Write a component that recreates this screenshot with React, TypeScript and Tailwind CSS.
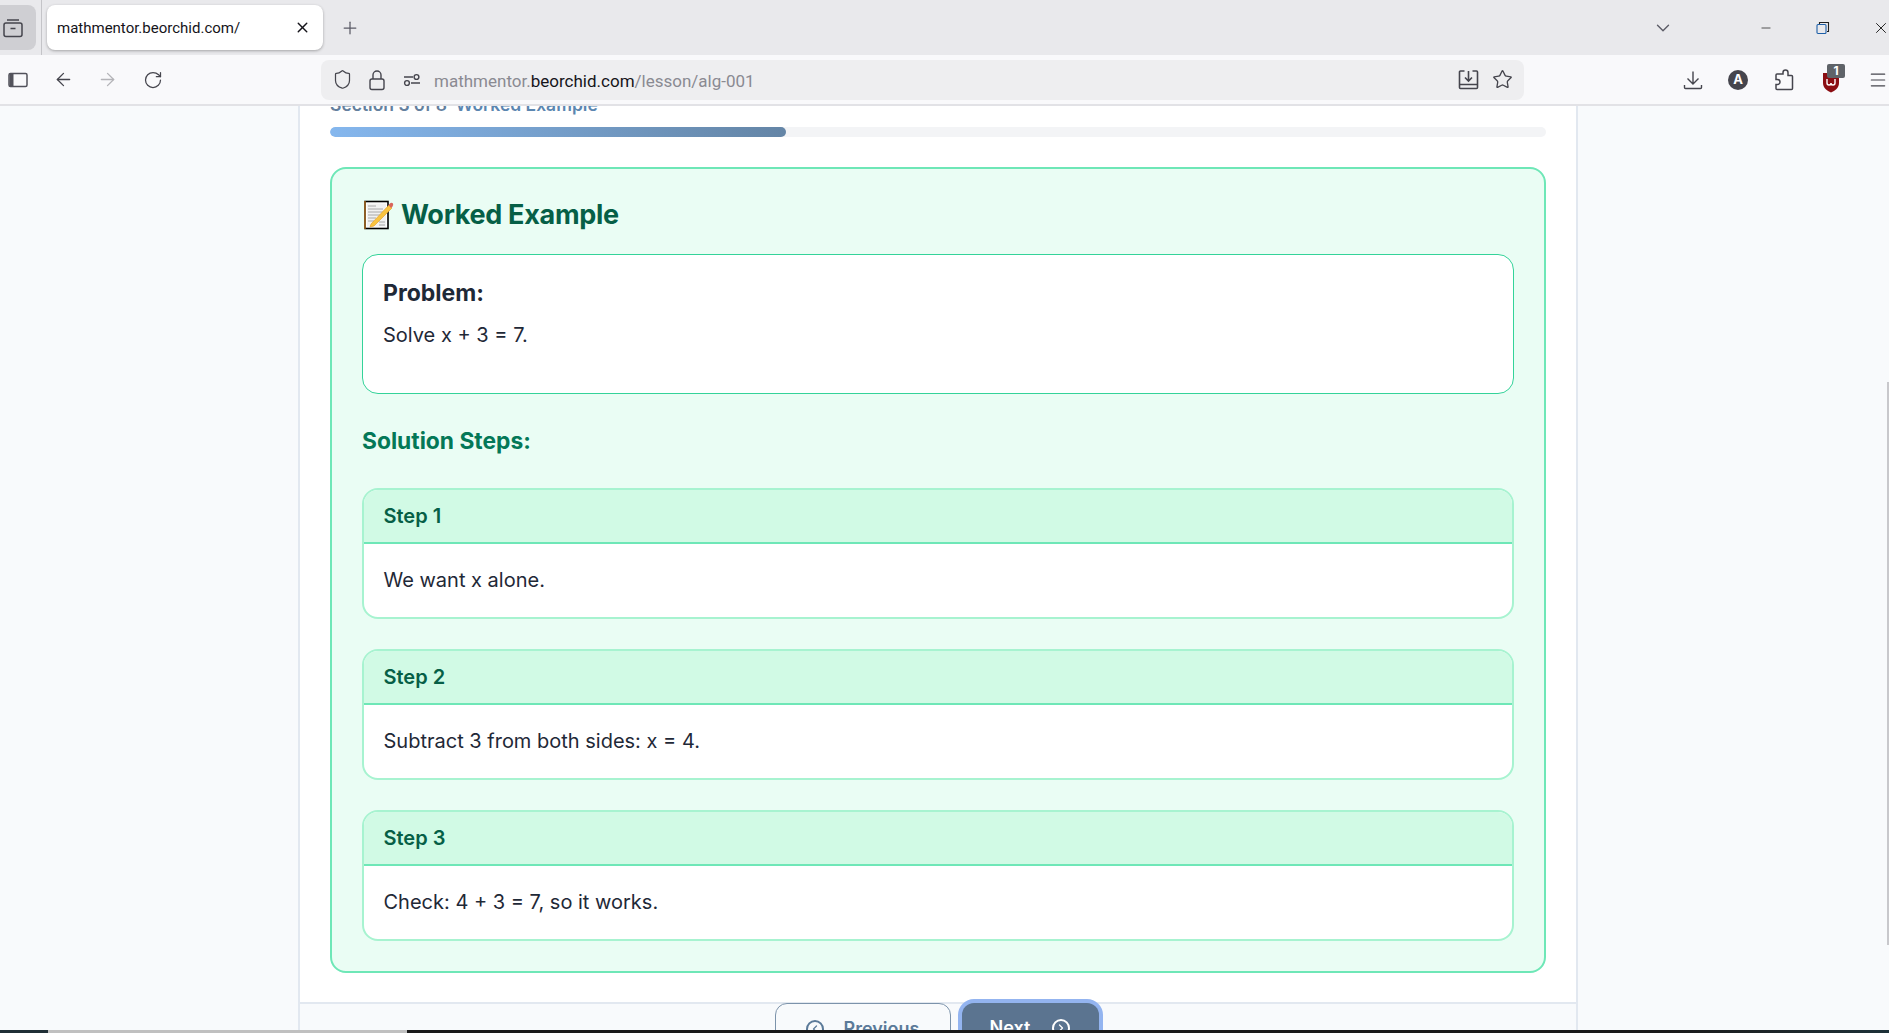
import { ArrowLeft, ArrowRight, RotateCw, Star, Shield, Menu, ChevronDown, ChevronLeft, ChevronRight, Plus, X, Minus } from "lucide-react"

const steps = [
  { title: "Step 1", body: "We want x alone." },
  { title: "Step 2", body: "Subtract 3 from both sides: x = 4." },
  { title: "Step 3", body: "Check: 4 + 3 = 7, so it works." },
]

function MemoIcon() {
  return (
    <svg width="30" height="30" viewBox="0 0 30 30" className="shrink-0">
      <rect x="1" y="1.5" width="23" height="27" fill="#fff" stroke="#000" strokeWidth="1.6" />
      <path d="M1 1v28" stroke="#e8891c" strokeWidth="1" />
      <rect x="3" y="3.5" width="19" height="23" fill="#f1f1f1" />
      <g stroke="#a8a8a8" strokeWidth="1">
        <path d="M4 6h8M4 9h15M4 12h15M4 15h12M4 18h8M4 21h6M15 22h6M15 25h6" />
      </g>
      <path d="M7 24 L25 5 L28 8 L10 26 L6 27 Z" fill="#f9c440" stroke="#e49b1f" strokeWidth="0.6" />
      <path d="M24.5 5 L26.5 3 Q28 2.4 29 3.6 Q29.6 5 28.5 6.5 L27 8 Z" fill="#d9655b" />
    </svg>
  )
}

function SidebarIcon() {
  return (
    <svg width="20" height="20" viewBox="0 0 20 20" fill="none" stroke="#52525b" strokeWidth="1.5">
      <rect x="1" y="3.500" width="18" height="13" rx="1.5" />
      <path d="M3.500 4v12" strokeWidth="4" />
    </svg>
  )
}

function LockIcon() {
  return (
    <svg width="20" height="22" viewBox="0 0 20 22" fill="none" stroke="#45454d" strokeWidth="1.4" className="ml-[14px]">
      <rect x="3" y="10" width="14" height="10.500" rx="2" />
      <path d="M6 10V6a4 4 0 0 1 8 0v4" />
    </svg>
  )
}

function DownloadIcon() {
  return (
    <svg width="20" height="20" viewBox="0 0 20 20" fill="none" stroke="#45454d" strokeWidth="1.4" className="mr-[25px]">
      <path d="M10 1.500v12M4.500 8.500l5.500 5.500 5.500-5.500M1.500 15v2.500a1 1 0 0 0 1 1h15a1 1 0 0 0 1-1V15" />
    </svg>
  )
}

function PuzzleIcon() {
  return (
    <svg width="20" height="22" viewBox="0 0 20 22" fill="none" stroke="#45454d" strokeWidth="1.5" className="mr-[28px]">
      <path d="M9 5V3.500a2.500 2.500 0 0 1 5 0V6.500h3.500a1 1 0 0 1 1 1V19.500a1 1 0 0 1-1 1H3a1 1 0 0 1-1-1V15.500h1.500a2.500 2.500 0 0 0 0-5H2V6a1 1 0 0 1 1-1Z" />
    </svg>
  )
}

export default function App() {
  return (
    <div className="flex h-screen w-full flex-col overflow-hidden bg-[#f8fafc] font-['Inter',sans-serif]">
      {/* tab strip */}
      <div className="flex h-[55px] shrink-0 items-center bg-[#e9e9ec]">
        <div className="flex h-[45px] w-[36px] items-center justify-center rounded-r-lg bg-[#cfcfd3] pr-[10px]">
          <svg width="20" height="20" viewBox="0 0 20 20" fill="none" stroke="#45454d" strokeWidth="1.5">
            <rect x="1" y="5" width="18" height="13.500" rx="2" />
            <path d="M4 2h12M7.500 10.500h5" />
          </svg>
        </div>
        <div className="ml-[5px] h-[55px] w-px bg-[#c4c4c8]" />
        <div className="ml-[5px] flex h-[45px] w-[276px] items-center justify-between rounded-lg bg-white pl-[10px] pr-[12px] shadow-[0_1px_3px_rgba(0,0,0,0.3)]">
          <span className="pt-[2px] font-['Roboto',sans-serif] text-[15px] text-[#15141a]">mathmentor.beorchid.com/</span>
          <X size={17} color="#15141a" strokeWidth={2} />
        </div>
        <Plus size={20} color="#5b5b66" strokeWidth={1.5} className="ml-[17px]" />
        <div className="flex-1" />
        <ChevronDown size={22} color="#5b5b66" strokeWidth={1.5} className="mr-[85px]" />
        <Minus size={14} color="#222" strokeWidth={1.3} className="mr-[43px]" />
        <svg width="14" height="14" viewBox="0 0 14 14" fill="none" stroke="#222" strokeWidth="1.1" className="mr-[42px]">
          <rect x="1" y="3.500" width="9" height="9" rx="1" stroke="#1d5fa8" />
          <path d="M3.500 3V1.500h9v9H11" />
        </svg>
        <X size={18} color="#222" strokeWidth={1.3} className="mr-[-1px]" />
      </div>

      {/* nav bar */}
      <div className="z-10 flex h-[51px] shrink-0 items-center border-b-2 border-[#e2e2e6] bg-[#f9f9fb]">
        <div className="ml-[8px] flex items-center">
          <SidebarIcon />
          <ArrowLeft size={21} color="#45454d" strokeWidth={1.5} className="ml-[25px]" />
          <ArrowRight size={21} color="#b4b4b8" strokeWidth={1.5} className="ml-[23px]" />
          <RotateCw size={20} color="#45454d" strokeWidth={1.5} className="ml-[25px]" />
        </div>
        <div className="ml-[158px] flex h-[40px] w-[1203px] items-center rounded-lg bg-[#eeeef0] pl-[11px] pr-[11px]">
          <Shield size={21} color="#45454d" strokeWidth={1.4} />
          <LockIcon />
          <svg width="18" height="18" viewBox="0 0 18 18" fill="none" stroke="#45454d" strokeWidth="1.4" className="ml-[16px]">
            <path d="M1 6h9M8 12h9" />
            <circle cx="13.500" cy="6" r="2.400" />
            <circle cx="4" cy="12" r="2.400" />
          </svg>
          <div className="ml-[13px] pt-[5px] font-['Roboto',sans-serif] text-[17px] text-[#8a8a92]">
            mathmentor.<span className="text-[#15141a]">beorchid.com</span>/lesson/alg-001
          </div>
          <div className="flex-1" />
          <svg width="21" height="21" viewBox="0 0 21 21" fill="none" stroke="#45454d" strokeWidth="1.6">
            <path d="M6.500 2H2.500a1 1 0 0 0-1 1v15.500a1 1 0 0 0 1 1h16a1 1 0 0 0 1-1V3a1 1 0 0 0-1-1h-4" />
            <path d="M10.500 2v9M7 8.500l3.500 3.500L14 8.500M1.500 15.500h18" />
          </svg>
          <Star size={21} color="#45454d" strokeWidth={1.5} className="ml-[13px]" />
        </div>
        <div className="flex-1" />
        <DownloadIcon />
        <div className="mr-[26px] flex h-[20px] w-[20px] items-center justify-center rounded-full bg-[#45454d] text-[13px] font-bold text-white">A</div>
        <PuzzleIcon />
        <div className="relative mr-[26px] h-[24px] w-[20px]">
          <svg width="18" height="22" viewBox="0 0 18 22" className="mt-[3px]">
            <path d="M1 2h16v10c0 5-4 7.500-8 9.500C5 19.500 1 17 1 12Z" fill="#8b0d12" />
            <path d="M5 8v4a2 2 0 0 0 4 0 2 2 0 0 0 4 0V8" fill="none" stroke="#fff" strokeWidth="1.4" />
          </svg>
          <span className="absolute left-[5px] top-[-4px] flex h-[14px] w-[18px] items-center justify-center rounded-[2px] bg-[#5f6368] text-[12px] font-bold leading-none text-white">1</span>
        </div>
        <Menu size={20} color="#45454d" strokeWidth={1.4} className="mr-[1px]" />
      </div>

      {/* page */}
      <div className="flex min-h-0 flex-1">
        <div className="w-[298px] shrink-0 bg-[#f8fafc]" />
        <div className="flex w-[1280px] shrink-0 flex-col overflow-hidden border-x-2 border-[#e2e8f0] bg-white">
          <div className="min-h-0 flex-1 px-[30px]">
            <div className="mt-[-12px] text-[17.5px] font-semibold leading-[22px] text-[#64809e]">
              Section 3 of 8 <span className="ml-1 text-[#5b86b0]">Worked Example</span>
            </div>
            <div className="mt-[11px] h-[10px] w-full overflow-hidden rounded-full bg-[#f3f4f6]">
              <div className="h-full w-[37.5%] rounded-full bg-gradient-to-r from-[#85b7ee] to-[#6485a6]" />
            </div>
            <div className="mt-[30px] h-[806px] rounded-2xl border-2 border-[#6ee7b7] bg-[#eafdf4] px-[30px] pt-[30px]">
              <div className="flex h-[30px] items-center gap-[7px] pl-[2px] pt-[2px]">
                <MemoIcon />
                <h2 className="text-[27px] font-bold tracking-[-0.3px] text-[#065f46]">Worked Example</h2>
              </div>
              <div className="mt-[25px] h-[140px] rounded-2xl border border-[#34d399] bg-white px-[20px] pt-[20px]">
                <h3 className="pt-[3px] text-[23px] font-bold leading-[30px] text-[#1f2937]">Problem:</h3>
                <p className="mt-[11px] text-[20px] leading-[32px] text-[#1f2937]">Solve x + 3 = 7.</p>
              </div>
              <h3 className="mt-[31px] text-[22.8px] font-bold leading-[32px] text-[#047857]">Solution Steps:</h3>
              <div className="mt-[31px] flex flex-col gap-[30px]">
                {steps.map((s) => (
                  <div key={s.title} className="h-[131px] overflow-hidden rounded-2xl border-2 border-[#a7f3d0] bg-white">
                    <div className="flex h-[54px] items-center border-b-2 border-[#6ee7b7] bg-[#d1fae5] pl-[19.5px] text-[20px] font-semibold text-[#065f46]">
                      {s.title}
                    </div>
                    <div className="flex h-[72px] items-center pl-[19.5px] text-[20px] text-[#1f2937]">{s.body}</div>
                  </div>
                ))}
              </div>
            </div>
          </div>
          {/* footer buttons, cut off by the window */}
          <div className="flex h-[28px] shrink-0 justify-center gap-[11px] border-t-2 border-[#e2e8f0] bg-[#f8fafc] pr-[3px]">
            <button className="mt-[-1px] flex h-[48px] w-[176px] items-start justify-center gap-[20px] rounded-t-xl border border-[#7c93ab] bg-[#f8fafc] pt-[13px] text-[18px] font-semibold leading-[24px] text-[#5b7a99]">
              <span className="mt-[3px] flex h-[18px] w-[18px] items-center justify-center rounded-full border-2 border-[#5b7a99]">
                <ChevronLeft size={12} color="#5b7a99" strokeWidth={2.5} />
              </span>
              Previous
            </button>
            <button className="mt-[-1px] flex h-[48px] w-[137px] items-start justify-center gap-[22px] rounded-t-xl bg-[#5b7490] pt-[13px] text-[18px] font-semibold leading-[24px] text-white shadow-[0_0_0_4px_#93b4f0]">
              Next
              <span className="mt-[3px] flex h-[18px] w-[18px] items-center justify-center rounded-full border-2 border-white">
                <ChevronRight size={12} color="#fff" strokeWidth={2.5} />
              </span>
            </button>
          </div>
        </div>
        <div className="flex flex-1 justify-end bg-[#f8fafc]">
          <div className="mt-[276px] mb-[85px] w-[2px] bg-[#c8c8cc]" />
        </div>
      </div>

      {/* window bottom edge */}
      <div className="z-10 flex h-[3px] shrink-0">
        <div className="w-[48px] bg-[#1f2e35]" />
        <div className="w-[359px] bg-[#c0c0c0]" />
        <div className="flex-1 bg-gradient-to-r from-[#1a1a1a] from-85% to-[#1d3138]" />
      </div>
    </div>
  )
}
